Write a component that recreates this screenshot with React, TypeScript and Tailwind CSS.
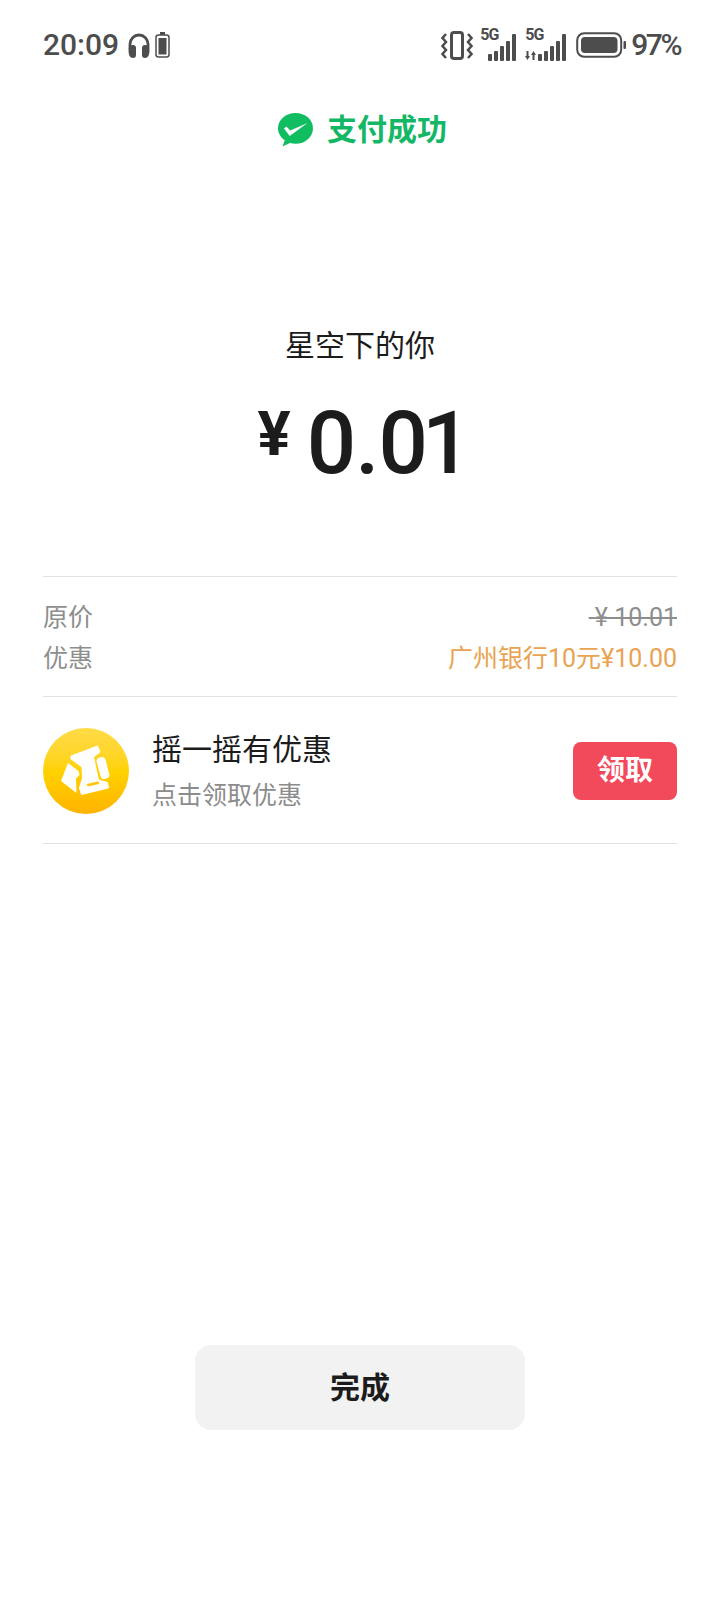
import React from "react";

const font = "font-['Roboto','Noto_Sans_CJK_SC',sans-serif]";

const Bars = () => (
    <>
        <rect x="0" y="20" width="4" height="7" rx="1"/>
        <rect x="6" y="17" width="4" height="10" rx="1"/>
        <rect x="12" y="12" width="4" height="15" rx="1"/>
        <rect x="18" y="7" width="4" height="20" rx="1"/>
        <rect x="24" y="0" width="4" height="27" rx="1"/>
    </>
);

const StatusBar = () => (
    <div className="h-[90px] pl-[43px] pr-[40px] flex justify-between items-center text-[#4d4d4d] shrink-0">
        <div className="flex items-center">
            <span className="text-[30px] font-medium leading-none">20:09</span>
            <svg className="ml-[9px]" width="22" height="25" viewBox="0 0 22 25" fill="none">
                <path d="M2 16V11a9 9 0 0 1 18 0v5" stroke="#4d4d4d" strokeWidth="2.800"/>
                <path d="M0.500 17c0-3 2-5 4.500-5 2 0 3 1 3 3v7c0 2-1 3-3 3-3 0-4.500-3-4.500-8zM21.500 17c0-3-2-5-4.500-5-2 0-3 1-3 3v7c0 2 1 3 3 3 3 0 4.500-3 4.500-8z" fill="#4d4d4d"/>
            </svg>
            <svg className="ml-[5px]" width="15" height="26" viewBox="0 0 15 26" fill="none">
                <rect x="5" y="0" width="5" height="3" fill="#4d4d4d"/>
                <rect x="1" y="3" width="13" height="22" rx="2.500" stroke="#4d4d4d" strokeWidth="1.500"/>
                <rect x="3.500" y="6" width="8" height="16.500" fill="#4d4d4d"/>
            </svg>
        </div>
        <div className="flex items-center">
            <svg width="32" height="29" viewBox="0 0 32 29" fill="none" stroke="#4d4d4d" strokeWidth="2.500">
                <rect x="10.500" y="1.500" width="11" height="26" rx="2.500" strokeWidth="3"/>
                <path d="M5 3 1.500 7 5 11 1.500 15 5 19 1.500 23 5 27M27 3l3.500 4L27 11l3.500 4L27 19l3.500 4L27 27"/>
            </svg>
            <div className="relative ml-[7px] w-[36px] h-[32px]">
                <span className="absolute left-0 top-[-1px] text-[16px] font-bold tracking-[-1px] leading-[14px]">5G</span>
                <svg className="absolute right-0 bottom-0" width="28" height="27" viewBox="0 0 28 27" fill="#4d4d4d">
                    <Bars/>
                </svg>
            </div>
            <div className="relative ml-[9px] w-[41px] h-[32px]">
                <span className="absolute left-0 top-[-1px] text-[16px] font-bold tracking-[-1px] leading-[14px]">5G</span>
                <svg className="absolute left-0 bottom-[1px]" width="11" height="9" viewBox="0 0 11 9" fill="#4d4d4d">
                    <path d="M1.500 0h2v5h1.500L2.500 9 0 5h1.500zM8.500 0 11 4H9.500v5h-2V4H6z"/>
                </svg>
                <svg className="absolute right-0 bottom-0" width="28" height="27" viewBox="0 0 28 27" fill="#4d4d4d">
                    <Bars/>
                </svg>
            </div>
            <svg className="ml-[10px]" width="50" height="26" viewBox="0 0 50 26" fill="none">
                <rect x="1.200" y="1.200" width="44" height="23.600" rx="7" stroke="#4d4d4d" strokeWidth="2"/>
                <rect x="5" y="5" width="36.500" height="16" rx="4" fill="#4d4d4d"/>
                <rect x="47.500" y="9" width="2.500" height="8" rx="1" fill="#4d4d4d"/>
            </svg>
            <span className="ml-[5px] text-[30px] font-medium tracking-[-2.500px] leading-none">97%</span>
        </div>
    </div>
);

const App = () => {
    return (
        <div className={`${font} w-[720px] h-[1604px] bg-white flex flex-col items-center overflow-hidden`}>
            <div className="w-full"><StatusBar/></div>

            <div className="mt-[18px] ml-[5px] h-[44px] flex items-center justify-center">
                <svg width="35" height="34" viewBox="0 0 35 34">
                    <path d="M17.500 0C7.800 0 0 6.800 0 15.200c0 4.900 2.700 9.300 6.800 12L4.500 33.500l7.500-3.400c1.700.5 3.600.7 5.500.7 9.700 0 17.500-6.900 17.500-15.600S27.200 0 17.500 0z" fill="#10bd60"/>
                    <path d="M6 15.500l2.300-2 4 4L29.500 10 11.700 23z" fill="#fff"/>
                </svg>
                <span className="ml-[14px] text-[30px] leading-none font-semibold text-[#13b765]">支付成功</span>
            </div>

            <p className="mt-[172px] text-[30px] leading-[44px] text-[#1c1c1c]">星空下的你</p>

            <div className="mt-[33px] ml-[8px] h-[84px] flex items-center text-[#1c1c1c] font-medium">
                <span className="text-[62px] leading-none font-bold mb-[18px]">¥</span>
                <span className="ml-[16px] text-[87px] leading-none tracking-[-1px]">0.<span className="tracking-[-6px]">0</span>1</span>
            </div>

            <div className="mt-[91px] w-[634px] h-[121px] border-y border-[#e3e3e3] pt-[20px] text-[25px]">
                <div className="flex justify-between items-center h-[41px] text-[#8e8e8e]">
                    <span>原价</span>
                    <span className="line-through">{"\u00A0"}¥ 10.01</span>
                </div>
                <div className="flex justify-between items-center h-[41px]">
                    <span className="text-[#8e8e8e]">优惠</span>
                    <span className="text-[#e9a352]">广州银行10元¥10.00</span>
                </div>
            </div>

            <div className="w-[634px] h-[147px] pt-[1px] border-b border-[#e3e3e3] flex items-center">
                <div className="w-[86px] h-[86px] rounded-full bg-linear-to-b from-[#ffdb45] via-[#ffd200] to-[#ffb300]">
                    <svg width="86" height="86" viewBox="0 0 86 86" fill="#fff">
                        <path d="M28 28 54.500 18 57 24 50.500 29 55.500 52 64.500 54.500 65.500 60 38.500 66.500 36.500 60 39.500 50 39 39 28 31z" strokeLinejoin="round" stroke="#fff" strokeWidth="1"/>
                        <path d="M18 53 25 35 35.500 43 36.500 47 33 50.500 33.500 65z"/>
                        <rect x="55.500" y="29" width="9" height="22" rx="3.500" transform="rotate(-15 60 40)"/>
                        <rect x="44" y="54.500" width="12" height="2.800" fill="#ffc60a" transform="rotate(-13 50 56)"/>
                    </svg>
                </div>
                <div className="ml-[23px] flex-1">
                    <p className="text-[30px] leading-[44px] text-[#1c1c1c]">摇一摇有优惠</p>
                    <p className="mt-[6px] text-[25px] leading-[36px] text-[#8c8c8c]">点击领取优惠</p>
                </div>
                <button className="w-[104px] h-[58px] rounded-[8px] bg-[#f24a5a] text-white text-[28px] font-bold">领取</button>
            </div>

            <button className="mt-[501px] w-[330px] h-[85px] rounded-[16px] bg-[#f2f2f2] text-[#1c1c1c] text-[30px] font-bold">完成</button>
        </div>
    );
};

export default App;
